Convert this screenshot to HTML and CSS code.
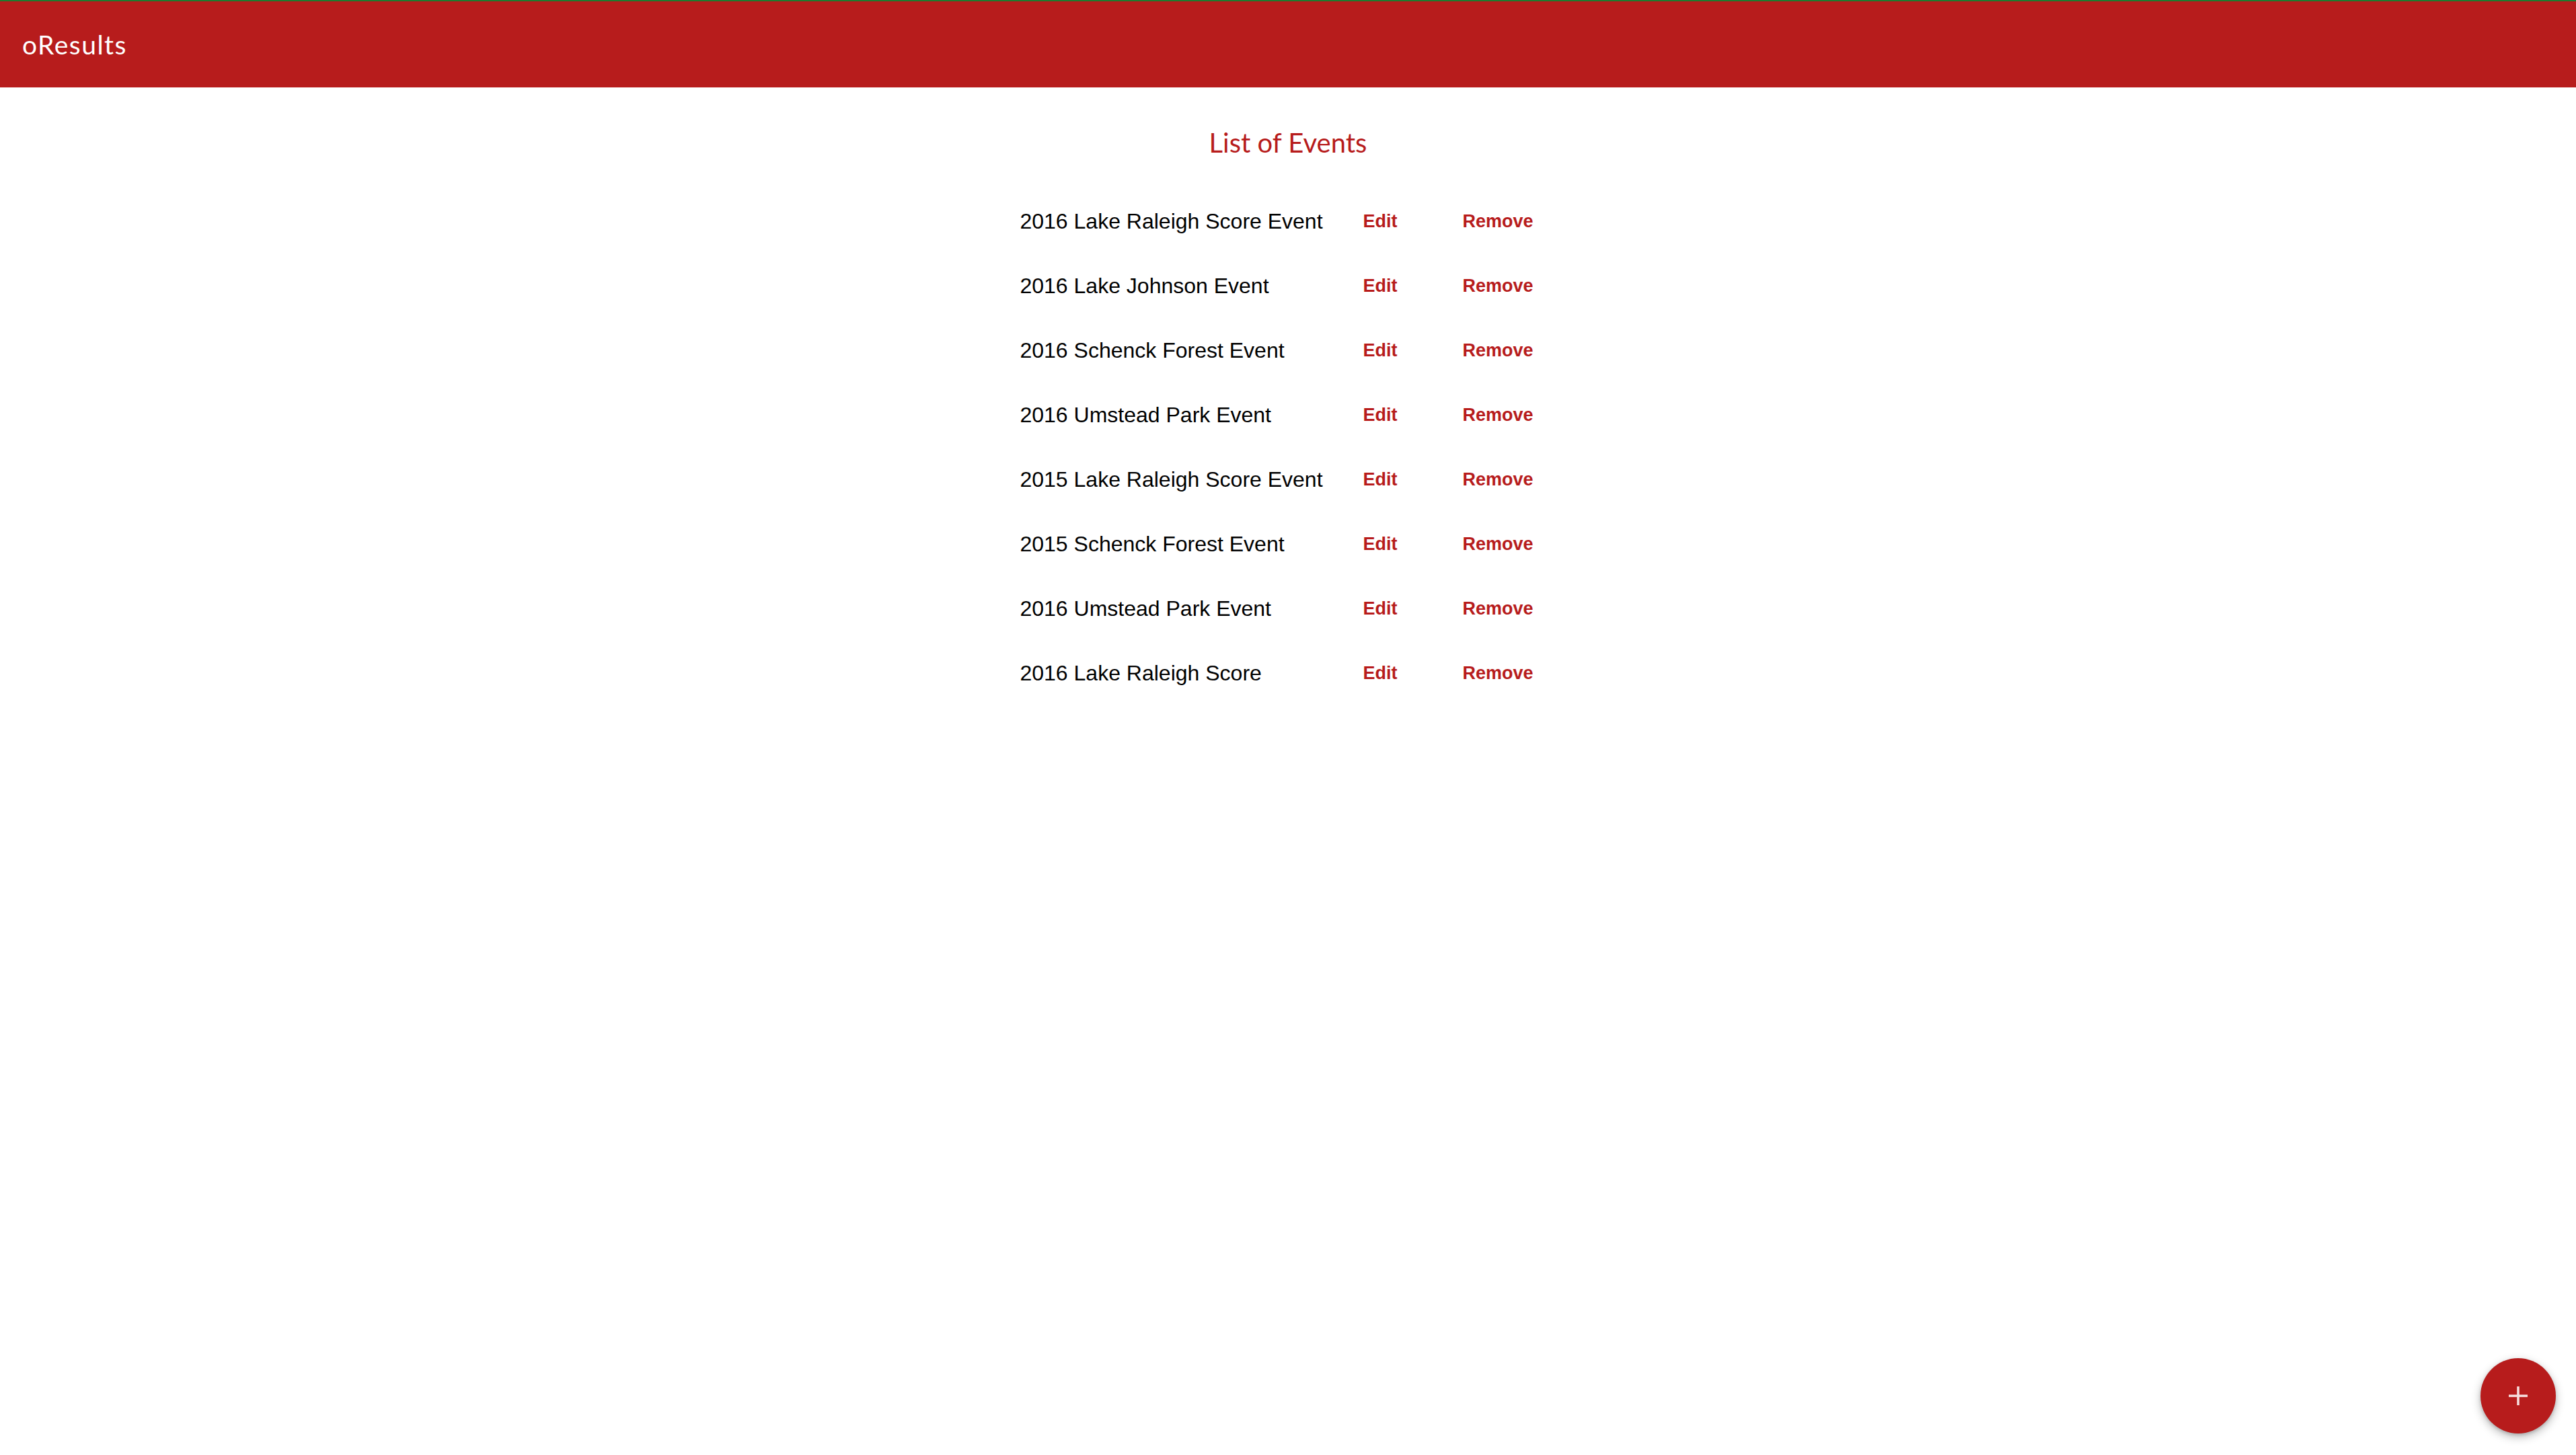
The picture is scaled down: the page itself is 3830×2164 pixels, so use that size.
FILE: index.html
```html
<!DOCTYPE html>
<html lang="en">
<head>
<meta charset="utf-8">
<title>oResults</title>
<link rel="stylesheet" href="styles.css">
</head>
<body>
<header class="topbar">
  <span class="brand">oResults</span>
</header>
<main class="content">
  <h1 class="title">List of Events</h1>
  <div class="events">
    <div class="event-name">2016 Lake Raleigh Score Event</div><a class="action" href="#">Edit</a><a class="action" href="#">Remove</a>
    <div class="event-name">2016 Lake Johnson Event</div><a class="action" href="#">Edit</a><a class="action" href="#">Remove</a>
    <div class="event-name">2016 Schenck Forest Event</div><a class="action" href="#">Edit</a><a class="action" href="#">Remove</a>
    <div class="event-name">2016 Umstead Park Event</div><a class="action" href="#">Edit</a><a class="action" href="#">Remove</a>
    <div class="event-name">2015 Lake Raleigh Score Event</div><a class="action" href="#">Edit</a><a class="action" href="#">Remove</a>
    <div class="event-name">2015 Schenck Forest Event</div><a class="action" href="#">Edit</a><a class="action" href="#">Remove</a>
    <div class="event-name">2016 Umstead Park Event</div><a class="action" href="#">Edit</a><a class="action" href="#">Remove</a>
    <div class="event-name">2016 Lake Raleigh Score</div><a class="action" href="#">Edit</a><a class="action" href="#">Remove</a>
  </div>
</main>
<button class="fab" type="button" aria-label="Add event">
  <svg width="30" height="30" viewBox="0 0 30 30"><path d="M15 1v28M1 15h28" stroke="#f6dede" stroke-width="3.5" fill="none"/></svg>
</button>
</body>
</html>
```

FILE: styles.css
```css
html, body {
  margin: 0;
  padding: 0;
  background: #ffffff;
}
body {
  font-family: "Liberation Sans", Arial, sans-serif;
  color: #000;
  min-height: 2164px;
}
.topbar {
  box-sizing: border-box;
  height: 130px;
  border-top: 2px solid #1d7a2e;
  background: #b71c1c;
  display: flex;
  align-items: center;
  padding-left: 33px;
}
.brand {
  font-family: "Lato", "Open Sans", sans-serif;
  font-size: 39px;
  line-height: 46px;
  color: #ffffff;
  letter-spacing: 1.5px;
}
.content {
  display: flex;
  flex-direction: column;
  align-items: center;
}
.title {
  margin: 58px 0 45px;
  font-family: "Lato", "Open Sans", sans-serif;
  font-weight: 400;
  font-size: 40px;
  line-height: 48px;
  color: #b71c1c;
}
.events {
  display: grid;
  grid-template-columns: 510px 148px auto;
  grid-auto-rows: 96px;
  align-items: center;
  padding-right: 34px;
}
.event-name {
  font-size: 32px;
  line-height: 36px;
}
.action {
  font-size: 27px;
  line-height: 32px;
  font-weight: 700;
  color: #b71c1c;
  text-decoration: none;
}
.fab {
  position: fixed;
  right: 30px;
  bottom: 32px;
  width: 112px;
  height: 112px;
  border-radius: 50%;
  border: none;
  padding: 0;
  background: #b71c1c;
  box-shadow: 0 5px 14px rgba(0, 0, 0, 0.28), 0 2px 5px rgba(0, 0, 0, 0.16);
  display: flex;
  align-items: center;
  justify-content: center;
}
```
